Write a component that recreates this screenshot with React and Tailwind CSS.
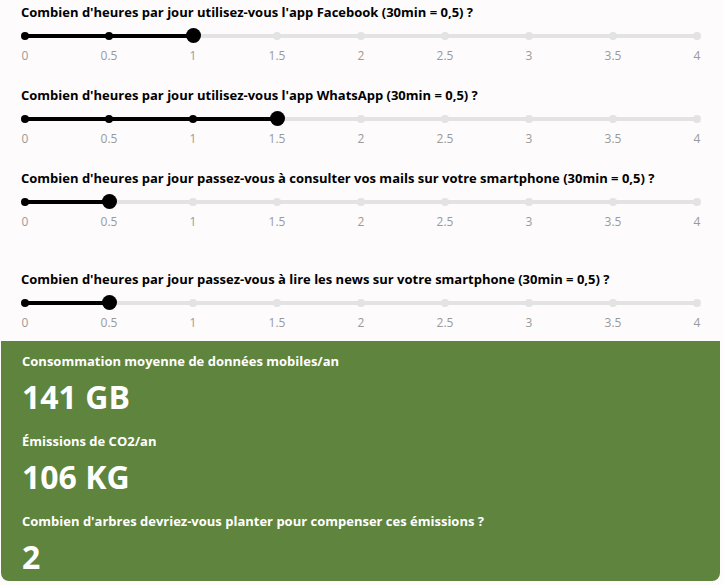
import React from 'react';

const questions = [
  { label: "Combien d'heures par jour utilisez-vous l'app Facebook (30min = 0,5) ?", value: 1 },
  { label: "Combien d'heures par jour utilisez-vous l'app WhatsApp (30min = 0,5) ?", value: 1.5 },
  { label: "Combien d'heures par jour passez-vous à consulter vos mails sur votre smartphone (30min = 0,5) ?", value: 0.5 },
  { label: "Combien d'heures par jour passez-vous à lire les news sur votre smartphone (30min = 0,5) ?", value: 0.5, spaced: true, last: true },
];

const steps = [0, 0.5, 1, 1.5, 2, 2.5, 3, 3.5, 4];

function Slider({ value }) {
  return (
    <div className="ml-[25px] w-[672px]">
      <div className="relative h-[15px]">
        <div className="absolute left-0 right-0 top-[6px] h-[4px] rounded-full bg-[#e3e3e3]" />
        <div
          className="absolute left-0 top-[6px] h-[4px] bg-black"
          style={{ width: `${(value / 4) * 100}%` }}
        />
        <div className="relative flex h-full justify-between">
          {steps.map((s) => (
            <div key={s} className="flex w-0 items-center justify-center">
              {s === value ? (
                <div className="h-[15px] w-[15px] shrink-0 rounded-full bg-black" />
              ) : (
                <div
                  className={
                    'h-[8px] w-[8px] shrink-0 rounded-full ' +
                    (s < value ? 'bg-black' : 'bg-[#e3e3e3]')
                  }
                />
              )}
            </div>
          ))}
        </div>
      </div>
      <div className="mt-[5px] flex justify-between">
        {steps.map((s) => (
          <div key={s} className="flex w-0 justify-center">
            <span className="text-[12px] leading-[15px] text-[#9a9a9a]">{s}</span>
          </div>
        ))}
      </div>
    </div>
  );
}

export default function App() {
  return (
    <div className="min-h-[585px] bg-[#fdfbfc] font-['Open_Sans',sans-serif]">
      <div className="pt-[3px]">
        {questions.map((q) => (
          <div
            key={q.label}
            className={(q.spaced ? 'mt-[18px] ' : '') + (q.last ? 'pb-[11px]' : 'pb-[23px]')}
          >
            <div className="mb-[7px] pl-[21px] text-[13px] font-bold leading-[18px] text-black">
              {q.label}
            </div>
            <Slider value={q.value} />
          </div>
        ))}
      </div>
      <div className="ml-[1px] mr-[3px] rounded-b-[8px] bg-[#5f843e] px-[21px] pt-[11px] pb-[4px] text-white">
        <div className="text-[13px] font-bold leading-[18px]">Consommation moyenne de données mobiles/an</div>
        <div className="mt-[7px] text-[32px] font-bold leading-[40px]">141 GB</div>
        <div className="mt-[15px] text-[13px] font-bold leading-[18px]">Émissions de CO2/an</div>
        <div className="mt-[7px] text-[32px] font-bold leading-[40px]">106 KG</div>
        <div className="mt-[15px] text-[13px] font-bold leading-[18px]">
          Combien d'arbres devriez-vous planter pour compenser ces émissions ?
        </div>
        <div className="mt-[7px] text-[32px] font-bold leading-[40px]">2</div>
      </div>
    </div>
  );
}
